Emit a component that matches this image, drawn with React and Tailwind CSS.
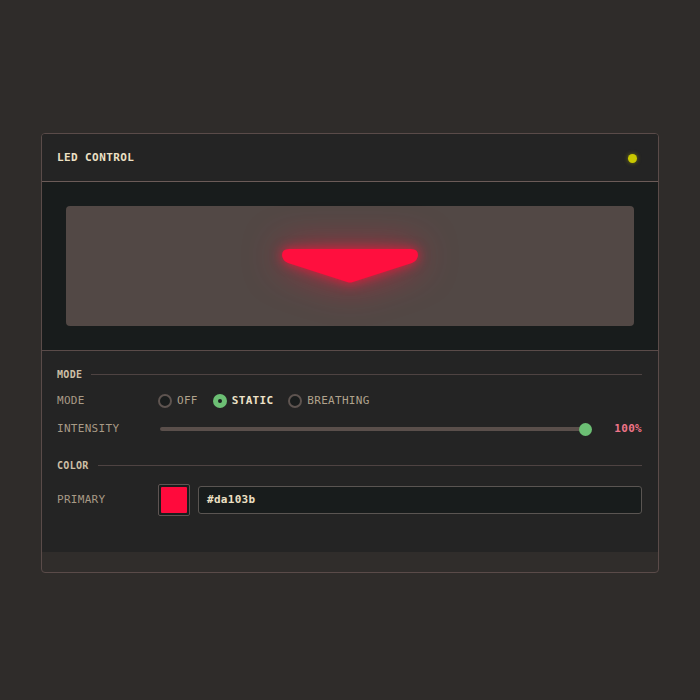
import React from 'react';

const mono = { fontFamily: '"DejaVu Sans Mono", "Liberation Mono", monospace' };

const Radio = ({ label, active }) => (
  <div className="flex items-center gap-[5px]">
    {active ? (
      <span className="w-[14px] h-[14px] rounded-full bg-[#6cbf74] flex items-center justify-center">
        <span className="w-[4px] h-[4px] rounded-full bg-[#1c2020]" />
      </span>
    ) : (
      <span className="w-[14px] h-[14px] rounded-full border-2 border-[#5e5450] bg-[#1a1d1d]" />
    )}
    <span className={active ? 'font-bold text-[#eee2c8]' : 'text-[#b0a28c]'}>{label}</span>
  </div>
);

const SectionHeader = ({ title }) => (
  <div className="flex items-center gap-[9px] h-[14px]">
    <span className="text-[10px] font-bold tracking-[0.3px] text-[#cdbfa6]">{title}</span>
    <div className="flex-1 h-px bg-[#4e4342]" />
  </div>
);

export default function App() {
  return (
    <div className="min-h-screen bg-[#2f2c2a] pt-[133px]" style={mono}>
      <div className="mx-auto w-[618px] border border-[#5a4b49] rounded-[4px] overflow-hidden bg-[#302d2b]">
        {/* header */}
        <div className="h-[48px] pl-[15px] pr-4 pt-[1px] flex items-center justify-between bg-[#242424] border-b border-[#6b5b58]">
          <span className="text-[11px] font-bold tracking-[0.4px] text-[#ece0c4]">LED CONTROL</span>
          <span className="w-[9px] h-[9px] rounded-full bg-[#c9c800] shadow-[0_0_4px_rgba(200,200,0,0.5)] mr-[5px]" />
        </div>

        {/* preview */}
        <div className="bg-[#181c1c] p-6 border-b border-[#5a4b49]">
          <div className="h-[120px] rounded-[4px] bg-[#524845] flex items-center justify-center">
            <svg width="136" height="34" viewBox="0 0 136 34" style={{ filter: 'drop-shadow(0 0 6px rgba(255,20,60,0.8)) drop-shadow(0 0 18px rgba(255,20,60,0.5))', overflow: 'visible' }}>
              <path d="M7 0 H129 Q136 0 136 6 Q136 11 130 14 L71 33 Q68 34 65 33 L6 14 Q0 11 0 6 Q0 0 7 0 Z" fill="#ff0f3e" />
            </svg>
          </div>
        </div>

        {/* controls */}
        <div className="bg-[#242424] pl-[15px] pr-4 pt-4 pb-[36px] text-[11px] tracking-[0.3px]">
          <SectionHeader title="MODE" />
          <div className="mt-[6px] h-[28px] flex items-center">
            <span className="w-[101px] text-[#a89a86]">MODE</span>
            <div className="flex items-center gap-[15px]">
              <Radio label="OFF" />
              <Radio label="STATIC" active />
              <Radio label="BREATHING" />
            </div>
          </div>
          <div className="h-[28px] flex items-center">
            <span className="w-[103px] text-[#a89a86]">INTENSITY</span>
            <div className="flex-1 relative h-[14px] flex items-center">
              <div className="w-full h-[4px] rounded-full bg-[#5a4f4b]" />
              <span className="absolute right-[-6px] w-[13px] h-[13px] rounded-full bg-[#6cbf74]" />
            </div>
            <span className="w-[56px] text-right font-bold text-[#f07488]">100%</span>
          </div>

          <div className="mt-[15px]">
            <SectionHeader title="COLOR" />
          </div>
          <div className="mt-[12px] h-[32px] flex items-center">
            <span className="w-[101px] text-[#a89a86]">PRIMARY</span>
            <div className="w-[32px] h-[32px] border border-[#5e5452] rounded-[2px] bg-[#1a1d1d] flex items-center justify-center">
              <div className="w-[26px] h-[26px] bg-[#ff0a3c] rounded-[1px]" />
            </div>
            <div className="ml-[8px] flex-1 h-[28px] rounded-[3px] border border-[#5a5552] bg-[#181c1c] flex items-center px-2">
              <span className="font-bold text-[#ece0c4]">#da103b</span>
            </div>
          </div>
        </div>
        <div className="h-[20px]" />
      </div>
    </div>
  );
}
